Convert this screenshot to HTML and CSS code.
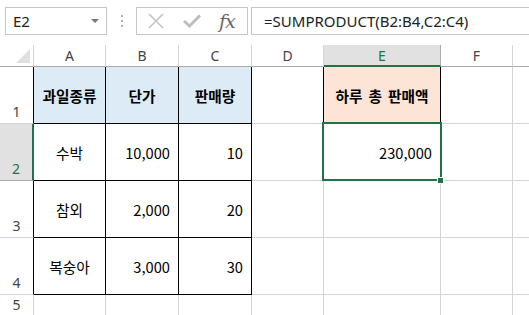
FILE: index.html
```html
<!DOCTYPE html>
<html lang="ko">
<head>
  <meta charset="UTF-8" />
  <title>SUMPRODUCT</title>
  <link rel="stylesheet" href="styles.css">
</head>
<body>

  <!-- 수식 입력줄 -->
  <div class="formula-bar">
    <div class="name-box">
      <span>E2</span>
      <span class="caret"></span>
    </div>
    <div class="grip"><i></i><i></i><i></i></div>
    <div class="fx-buttons">
      <svg class="icon-x" width="16" height="16" viewBox="0 0 16 16">
        <path d="M1 1 L15 15 M15 1 L1 15" stroke="#c4c4c4" stroke-width="1.6" fill="none"/>
      </svg>
      <svg class="icon-check" width="18" height="14" viewBox="0 0 18 14">
        <path d="M1 7 L6.5 12 L17 1.5" stroke="#bdbdbd" stroke-width="3" fill="none"/>
      </svg>
      <span class="fx">fx</span>
    </div>
    <div class="formula">=SUMPRODUCT(B2:B4,C2:C4)</div>
  </div>

  <!-- 시트 -->
  <div class="sheet">
    <div class="col-head corner">
      <svg width="14" height="14" viewBox="0 0 14 14"><polygon points="14,0 14,14 0,14" fill="#dfdfdf"/></svg>
    </div>
    <div class="col-head">A</div>
    <div class="col-head">B</div>
    <div class="col-head">C</div>
    <div class="col-head">D</div>
    <div class="col-head active">E</div>
    <div class="col-head">F</div>
    <div class="col-head last"></div>

    <div class="row-head edge">1</div>
    <div class="cell tbl title">과일종류</div>
    <div class="cell tbl title">단가</div>
    <div class="cell tbl title">판매량</div>
    <div class="cell edge"></div>
    <div class="cell total-title">하루 총 판매액</div>
    <div class="cell"></div>
    <div class="cell last"></div>

    <div class="row-head active">2</div>
    <div class="cell tbl">수박</div>
    <div class="cell tbl num">10,000</div>
    <div class="cell tbl num">10</div>
    <div class="cell"></div>
    <div class="cell num selected">230,000</div>
    <div class="cell"></div>
    <div class="cell last"></div>

    <div class="row-head edge">3</div>
    <div class="cell tbl">참외</div>
    <div class="cell tbl num">2,000</div>
    <div class="cell tbl num">20</div>
    <div class="cell"></div>
    <div class="cell"></div>
    <div class="cell"></div>
    <div class="cell last"></div>

    <div class="row-head edge">4</div>
    <div class="cell tbl">복숭아</div>
    <div class="cell tbl num">3,000</div>
    <div class="cell tbl num">30</div>
    <div class="cell"></div>
    <div class="cell"></div>
    <div class="cell"></div>
    <div class="cell last"></div>

    <div class="row-head">5</div>
    <div class="cell"></div>
    <div class="cell"></div>
    <div class="cell"></div>
    <div class="cell"></div>
    <div class="cell"></div>
    <div class="cell"></div>
    <div class="cell last"></div>
  </div>

</body>
</html>
```

FILE: styles.css
```css
:root {
  --grid: #d4d4d4;
  --head-line: #ababab;
  --green: #217346;
  --head-active: #e1e1e1;
  --blue-fill: #ddebf7;
  --orange-fill: #fce4d6;
}

body {
  margin: 0;
  background: #fff;
  font-family: "Noto Sans", "Noto Sans CJK KR", sans-serif;
  overflow: hidden;
}

/* 수식 입력줄 */
.formula-bar {
  height: 45px;
  display: flex;
  align-items: flex-start;
  padding-top: 7px;
  box-sizing: border-box;
}

.name-box {
  margin-left: 5px;
  width: 102px;
  height: 28px;
  box-sizing: border-box;
  border: 1px solid #c6c6c6;
  display: flex;
  align-items: center;
  justify-content: space-between;
  padding: 0 7px 0 7px;
  font-size: 15px;
  color: #222;
}

.caret {
  width: 0;
  height: 0;
  border-left: 4px solid transparent;
  border-right: 4px solid transparent;
  border-top: 4px solid #777;
}

.grip {
  width: 29px;
  height: 28px;
  display: flex;
  flex-direction: column;
  align-items: center;
  justify-content: center;
  gap: 3px;
}

.grip i {
  display: block;
  width: 2px;
  height: 2px;
  background: #b0b0b0;
}

.fx-buttons {
  width: 112px;
  height: 28px;
  box-sizing: border-box;
  border: 1px solid #c6c6c6;
  display: flex;
  align-items: center;
  padding-left: 11px;
}

.icon-check {
  margin-left: 19px;
}

.fx {
  margin-left: 18px;
  font-family: "DejaVu Serif", "Liberation Serif", serif;
  font-style: italic;
  font-size: 19px;
  line-height: 20px;
  color: #666;
  letter-spacing: -1px;
}

.formula {
  margin-left: 3px;
  flex: 1;
  height: 28px;
  box-sizing: border-box;
  border: 1px solid #c6c6c6;
  border-right: none;
  padding-left: 12px;
  font-size: 15px;
  line-height: 26px;
  color: #222;
  white-space: nowrap;
}

/* 시트 */
.sheet {
  display: grid;
  grid-template-columns: 34px 72px 73px 73px 72px 117px 72px 1fr;
  grid-template-rows: 22px 57px 57px 57px 57px 22px;
}

.sheet > div {
  box-sizing: border-box;
  border-right: 1px solid var(--grid);
  border-bottom: 1px solid var(--grid);
}

.sheet > .last {
  border-right: none;
}

.col-head {
  display: flex;
  align-items: center;
  justify-content: center;
  font-size: 14px;
  color: #444;
  border-bottom-color: var(--head-line) !important;
}

.corner {
  justify-content: flex-end;
  align-items: flex-end;
  padding: 0 3px 3px 0;
}

.corner svg {
  display: block;
}

.col-head.active {
  background: var(--head-active);
  color: var(--green);
  border-right-color: var(--head-line);
  border-bottom: 2px solid var(--green) !important;
}

.row-head {
  display: flex;
  align-items: flex-end;
  justify-content: center;
  font-size: 14px;
  line-height: 19px;
  padding-bottom: 2px;
  color: #444;
}

.row-head.edge {
  border-right-color: #000;
}

.row-head.active {
  background: var(--head-active);
  color: var(--green);
  border-right: 2px solid var(--green);
  border-bottom-color: var(--head-line);
}

.cell {
  display: flex;
  align-items: center;
  justify-content: center;
  font-family: "Noto Sans CJK KR", sans-serif;
  font-size: 14.67px;
  color: #000;
}

.cell.num {
  justify-content: flex-end;
  padding-right: 8px;
}

.cell.tbl {
  border-right-color: #000;
  border-bottom-color: #000;
}

.cell.edge {
  border-right-color: #000;
}

.title {
  background: var(--blue-fill);
  font-weight: bold;
}

.total-title {
  background: var(--orange-fill);
  font-weight: bold;
  border-right-color: #000 !important;
  word-spacing: 2px;
}

.selected {
  position: relative;
}

.selected::after {
  content: "";
  position: absolute;
  top: -2px;
  left: -2px;
  right: -2px;
  bottom: -1px;
  border: 2px solid var(--green);
  pointer-events: none;
}

.selected::before {
  content: "";
  position: absolute;
  right: -4px;
  bottom: -4px;
  width: 5px;
  height: 5px;
  background: var(--green);
  border: 1px solid #fff;
  z-index: 1;
}
```
